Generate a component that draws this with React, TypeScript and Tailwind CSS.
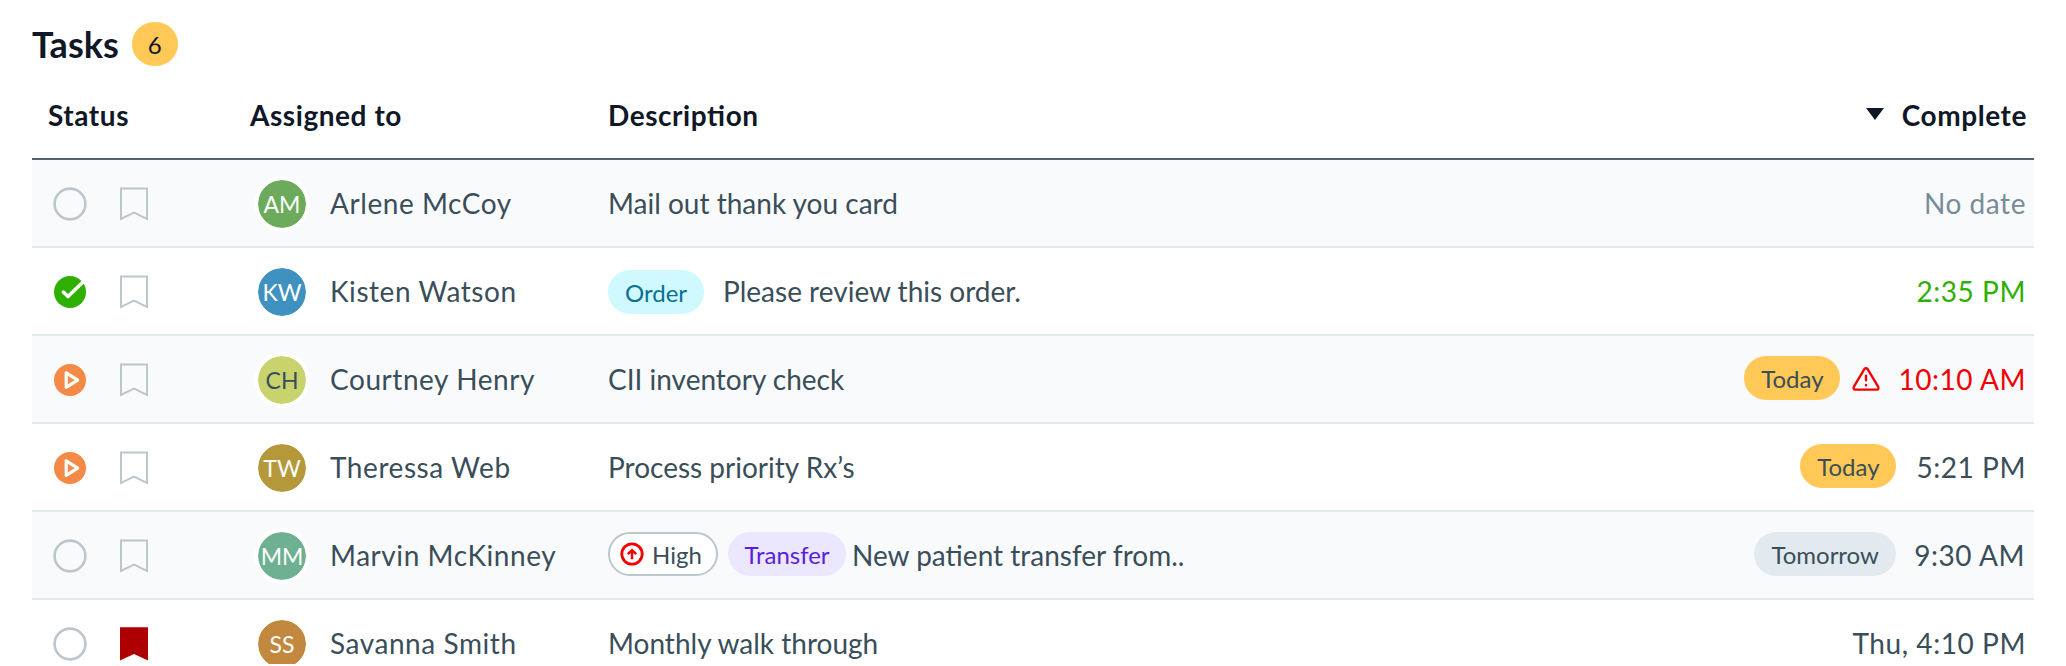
import type { ReactNode } from "react";

type Status = "open" | "done" | "progress";

interface Task {
  status: Status;
  flagged?: boolean;
  initials: string;
  avatar: string;
  name: string;
  tags?: ReactNode;
  description: string;
  due: ReactNode;
  time: string;
  timeClass: string;
}

function StatusIcon({ status }: { status: Status }) {
  if (status === "done") {
    return (
      <svg className="size-9 shrink-0" viewBox="0 0 36 36" fill="none">
        <circle cx="18" cy="18" r="16" fill="#2fb000" />
        <path d="M11.3 18 L16 22.6 L33 6" stroke="#fff" strokeWidth="3.5" strokeLinecap="round" strokeLinejoin="round" />
      </svg>
    );
  }
  if (status === "progress") {
    return (
      <svg className="size-9 shrink-0" viewBox="0 0 36 36" fill="none">
        <circle cx="18" cy="18" r="16" fill="#f58a46" />
        <path d="M14.2 10.8 V25.4 L25.7 18.1 Z" stroke="#fff" strokeWidth="3.2" strokeLinejoin="round" />
      </svg>
    );
  }
  return (
    <svg className="size-9 shrink-0" viewBox="0 0 36 36" fill="none">
      <circle cx="18" cy="18" r="15.4" stroke="#bcc7cd" strokeWidth="2.6" />
    </svg>
  );
}

function Bookmark({ flagged }: { flagged?: boolean }) {
  return (
    <svg className="h-[34px] w-7 shrink-0" viewBox="0 0 28 34" fill="none">
      {flagged ? (
        <path d="M0 0.3 H28 V33.6 L14 27 L0 33.6 Z" fill="#ae0000" />
      ) : (
        <path d="M1 1.4 H27 V31.9 L14 25.7 L1 31.9 Z" stroke="#bcc7cd" strokeWidth="2" />
      )}
    </svg>
  );
}

function Pill({ className, children }: { className: string; children: ReactNode }) {
  return (
    <span className={`flex h-11 shrink-0 items-center rounded-full pt-0.5 text-2xl ${className}`}>
      {children}
    </span>
  );
}

function HighIcon() {
  return (
    <svg className="-mt-0.5 size-6 shrink-0" viewBox="0 0 24 24" fill="none" stroke="#f20000">
      <circle cx="12" cy="12" r="10.2" strokeWidth="2.8" />
      <path d="M12 17.3 V8.5 M7.8 12.2 L12 8.2 L16.2 12.2" strokeWidth="2.5" />
    </svg>
  );
}

function WarningIcon() {
  return (
    <svg className="h-6 w-7 shrink-0" viewBox="0 0 28 24" fill="none" stroke="#f20000" strokeLinecap="round" strokeLinejoin="round">
      <path d="M12.2 2.3 L1.9 19.6 Q0.7 22.7 3.4 22.7 H24.6 Q27.3 22.7 26.1 19.6 L15.8 2.3 Q14 0.2 12.2 2.3 Z" strokeWidth="2.3" />
      <path d="M14 8.6 V13.2 M14 18 V18.2" strokeWidth="2.4" />
    </svg>
  );
}

const ink = "text-[#394e59]";

const tasks: Task[] = [
  {
    status: "open",
    initials: "AM",
    avatar: "bg-[#6dab5c] text-white",
    name: "Arlene McCoy",
    description: "Mail out thank you card",
    due: null,
    time: "No date",
    timeClass: "text-[#788c97]",
  },
  {
    status: "done",
    initials: "KW",
    avatar: "bg-[#3f91bf] text-white",
    name: "Kisten Watson",
    tags: <Pill className="mt-0.5 mr-[19px] w-24 justify-center bg-[#cff8ff] text-[#0b7192]">Order</Pill>,
    description: "Please review this order.",
    due: null,
    time: "2:35 PM",
    timeClass: "text-[#2fb000]",
  },
  {
    status: "progress",
    initials: "CH",
    avatar: "bg-[#c9d36d] text-[#394e59]",
    name: "Courtney Henry",
    description: "CII inventory check",
    due: (
      <div className="mr-[18px] flex items-center gap-3">
        <Pill className="mb-0.5 w-24 justify-center bg-[#ffc857] text-[#394e59]">Today</Pill>
        <WarningIcon />
      </div>
    ),
    time: "10:10 AM",
    timeClass: "text-[#f20000]",
  },
  {
    status: "progress",
    initials: "TW",
    avatar: "bg-[#b49839] text-white",
    name: "Theressa Web",
    description: "Process priority Rx’s",
    due: <Pill className="mr-5 mb-0.5 w-24 justify-center bg-[#ffc857] text-[#394e59]">Today</Pill>,
    time: "5:21 PM",
    timeClass: ink,
  },
  {
    status: "open",
    initials: "MM",
    avatar: "bg-[#6eb192] text-white",
    name: "Marvin McKinney",
    tags: (
      <>
        <Pill className="mr-2.5 mb-0.5 w-[110px] gap-2 border-2 border-[#bcc7cd] bg-white pl-2.5 text-[#394e59]">
          <HighIcon />
          High
        </Pill>
        <Pill className="mr-1.5 mb-0.5 w-[118px] justify-center bg-[#ebe7ff] text-[#5b21d9]">Transfer</Pill>
      </>
    ),
    description: "New patient transfer from..",
    due: <Pill className="mr-[18px] mb-0.5 w-[142px] justify-center bg-[#e2eaef] text-[#394e59]">Tomorrow</Pill>,
    time: "9:30 AM",
    timeClass: "mr-px text-[#394e59]",
  },
  {
    status: "open",
    flagged: true,
    initials: "SS",
    avatar: "bg-[#c2883e] text-white",
    name: "Savanna Smith",
    description: "Monthly walk through",
    due: null,
    time: "Thu, 4:10 PM",
    timeClass: ink,
  },
];

function TaskRow({ task, striped }: { task: Task; striped: boolean }) {
  return (
    <div
      className={`grid h-[88px] shrink-0 grid-cols-[222px_354px_1fr_auto] items-center border-b-2 border-[#e1eaed] pr-2 text-[28px] leading-none ${ink} ${striped ? "bg-[#f9fafc]" : "bg-white"}`}
    >
      <div className="flex items-center gap-8 pt-0.5 pl-5">
        <StatusIcon status={task.status} />
        <Bookmark flagged={task.flagged} />
      </div>
      <div className="flex items-center pt-0.5">
        <span className={`box-content flex size-12 shrink-0 items-center justify-center rounded-full border-4 border-white bg-clip-padding text-[23px] ${task.avatar}`}>
          {task.initials}
        </span>
        <span className="pb-0.5 pl-5 tracking-[0.56px]">{task.name}</span>
      </div>
      <div className="flex items-center">
        {task.tags}
        <span>{task.description}</span>
      </div>
      <div className="flex items-center justify-end">
        {task.due}
        <span className={`tracking-[0.56px] ${task.timeClass}`}>{task.time}</span>
      </div>
    </div>
  );
}

export default function App() {
  return (
    <main className="flex h-[664px] w-[2066px] flex-col overflow-hidden bg-white px-8 font-['Lato',sans-serif] text-[#101828]">
      <header className="flex h-[88px] shrink-0 items-center gap-[13px]">
        <h1 className="text-4xl font-bold">Tasks</h1>
        <span className="flex h-11 w-[46px] items-center justify-center rounded-full bg-[#ffc857] pt-0.5 text-2xl">6</span>
      </header>
      <div className="grid h-[72px] shrink-0 grid-cols-[218px_358px_1fr_auto] items-center border-b-2 border-[#4f6370] pr-[7px] pb-4 text-[28px] font-bold tracking-[0.56px] [font-feature-settings:'liga']">
        <span className="pl-4">Status</span>
        <span>Assigned to</span>
        <span>Description</span>
        <span className="flex items-center gap-[18px]">
          <svg className="-mt-[3px] h-3 w-[18px]" viewBox="0 0 18 12">
            <path d="M0 0 H18 L9 12 Z" fill="#101828" />
          </svg>
          Complete
        </span>
      </div>
      {tasks.map((task, i) => (
        <TaskRow key={task.name} task={task} striped={i % 2 === 0} />
      ))}
    </main>
  );
}
